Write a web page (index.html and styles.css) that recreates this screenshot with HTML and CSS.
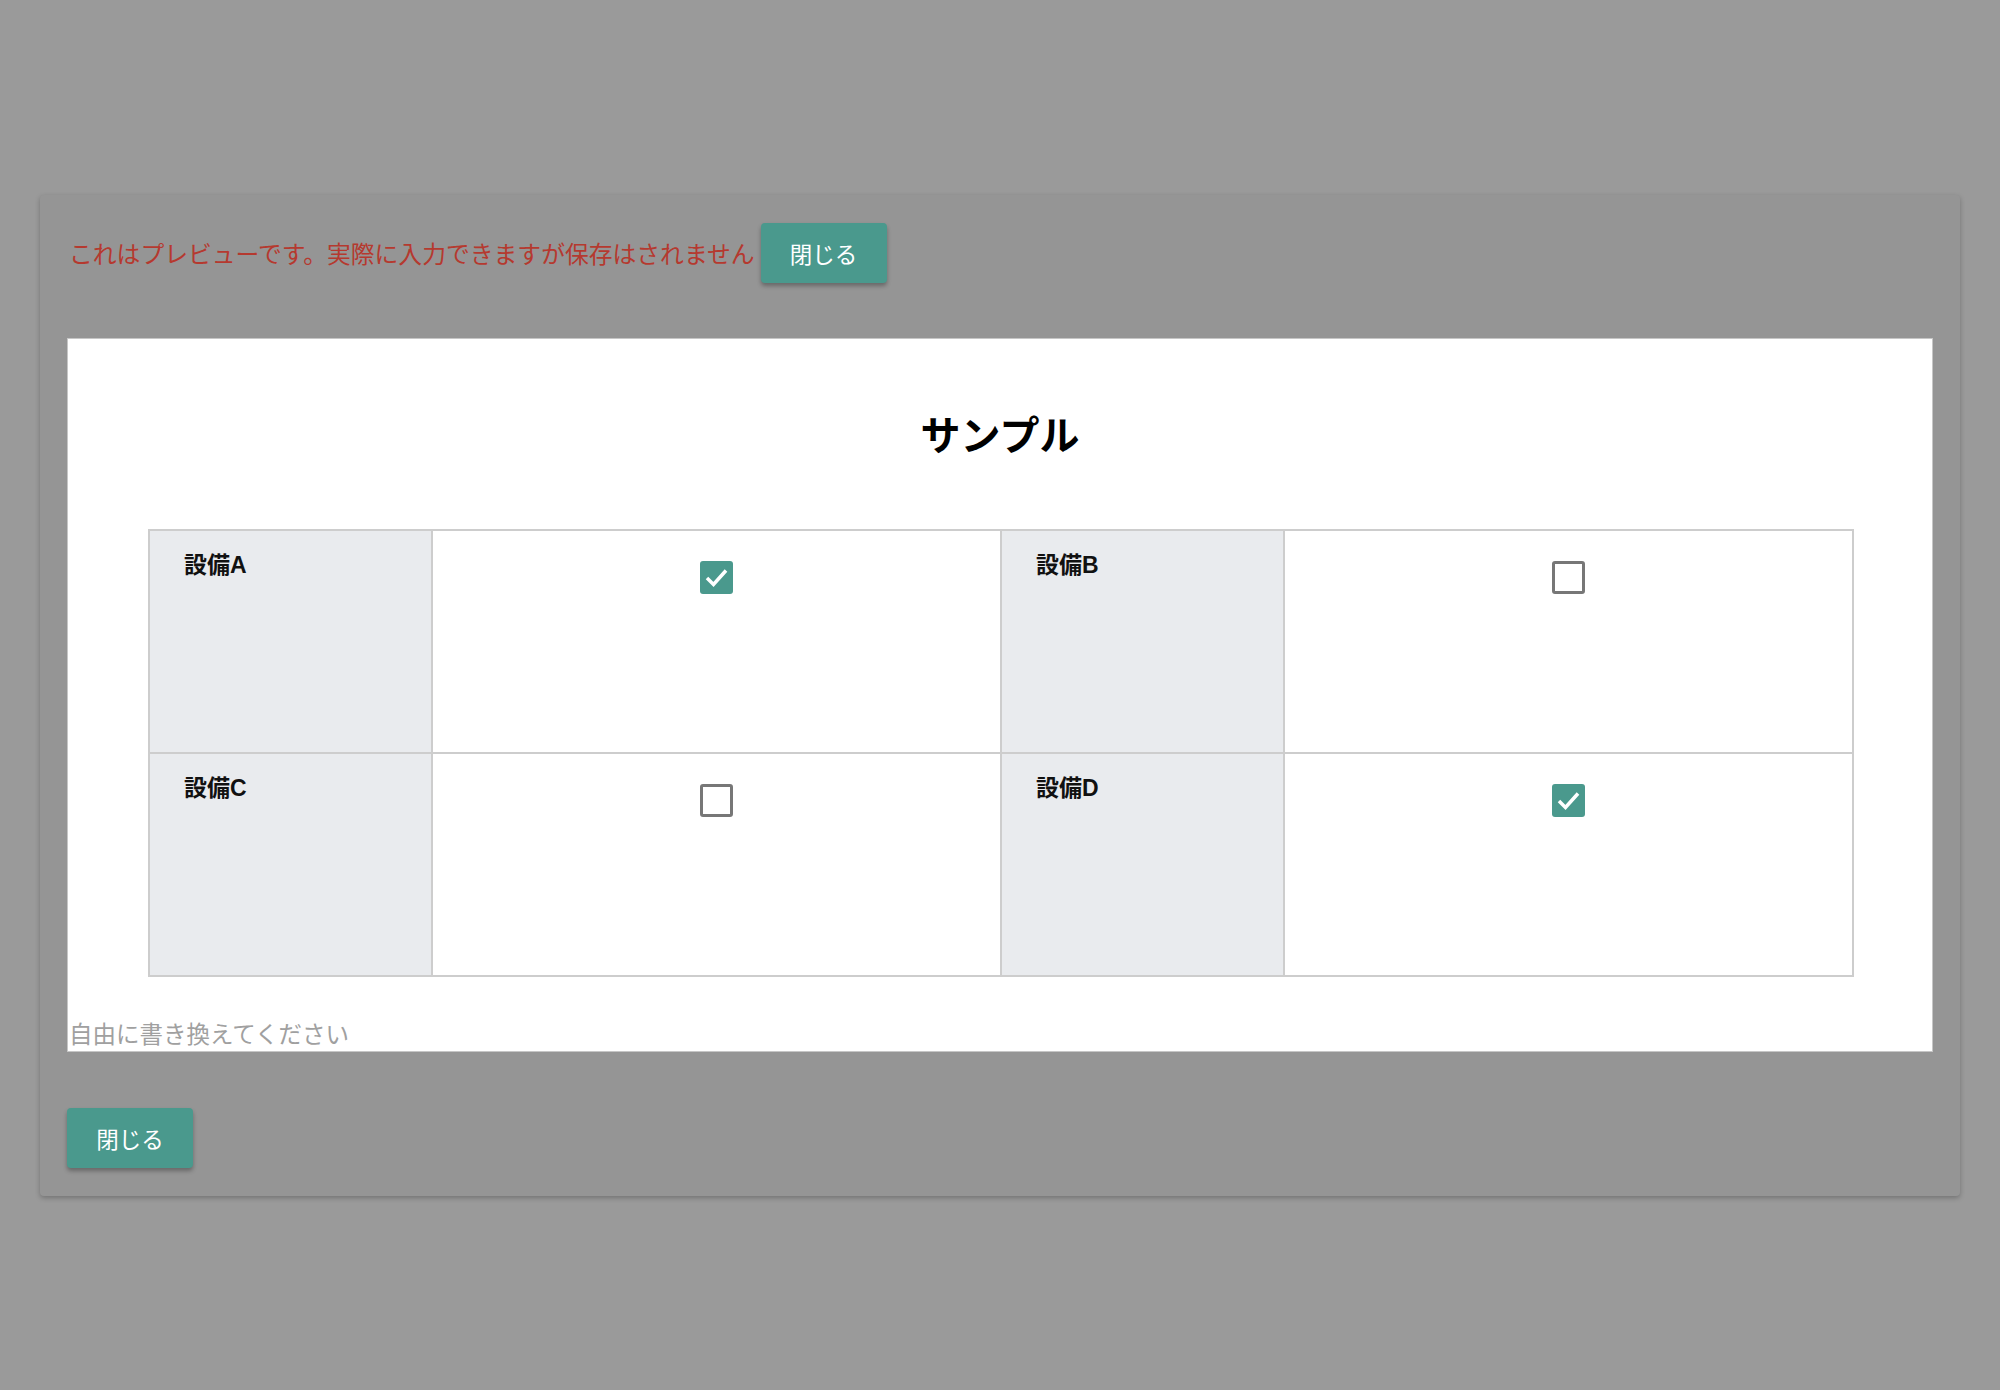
FILE: index.html
```html
<!DOCTYPE html>
<html lang="ja">
<head>
  <meta charset="utf-8">
  <title>プレビュー</title>
  <link rel="stylesheet" href="styles.css">
</head>
<body>
  <div class="dialog">
    <!-- notice row -->
    <div class="notice-row">
      <span class="notice">これはプレビューです。実際に入力できますが保存はされません</span>
      <button class="btn">閉じる</button>
    </div>

    <!-- preview sheet -->
    <div class="sheet">
      <h1 class="sheet-title">サンプル</h1>
      <table class="check-table">
        <colgroup>
          <col class="col-label">
          <col class="col-value">
          <col class="col-label">
          <col class="col-value">
        </colgroup>
        <tr>
          <th>設備A</th>
          <td><span class="box checked"><svg viewBox="0 0 33 33"><polyline points="7,17 13.5,23.5 26,9.5"/></svg></span></td>
          <th>設備B</th>
          <td><span class="box"></span></td>
        </tr>
        <tr>
          <th>設備C</th>
          <td><span class="box"></span></td>
          <th>設備D</th>
          <td><span class="box checked"><svg viewBox="0 0 33 33"><polyline points="7,17 13.5,23.5 26,9.5"/></svg></span></td>
        </tr>
      </table>
      <div class="memo">自由に書き換えてください</div>
    </div>

    <div class="footer-row">
      <button class="btn">閉じる</button>
    </div>
  </div>
</body>
</html>
```

FILE: styles.css
```css
html, body {
  height: 100%;
}

body {
  margin: 0;
  background-color: #9a9a9a;
  font-family: "Liberation Sans", "Noto Sans CJK JP", sans-serif;
  display: flex;
  align-items: center;
  justify-content: center;
}

/* Dialog */
.dialog {
  width: 1920px;
  box-sizing: border-box;
  padding: 28px 27px;
  background-color: #959595;
  border-radius: 4px;
  box-shadow: 0 2px 5px rgba(0, 0, 0, 0.25);
}

.notice-row {
  display: flex;
  align-items: center;
  gap: 6px;
  padding-left: 2px;
}

.notice {
  color: #b5392f;
  font-size: 23.8px;
  font-family: "Noto Sans CJK JP", sans-serif;
}

.btn {
  height: 60px;
  width: 126px;
  border: none;
  border-radius: 4px;
  background-color: #4a998d;
  color: white;
  font-family: "Noto Sans CJK JP", sans-serif;
  font-size: 22.5px;
  box-shadow: 0 3px 4px rgba(0, 0, 0, 0.3);
  padding: 0;
}

/* Sheet */
.sheet {
  margin-top: 55px;
  background-color: white;
  border: 1px solid #c6c6c6;
  padding-top: 64px;
}

.sheet-title {
  margin: 0;
  text-align: center;
  font-family: "Noto Sans CJK JP", sans-serif;
  font-size: 40px;
  font-weight: bold;
  line-height: 60px;
  color: black;
}

.check-table {
  margin: 66px 78px 0 80px;
  width: calc(100% - 158px);
  border-collapse: collapse;
  table-layout: fixed;
}

.col-label { width: 16.6%; }
.col-value { width: 33.4%; }

.check-table th,
.check-table td {
  border: 2px solid #cdcdcd;
  height: 223px;
  vertical-align: top;
  box-sizing: border-box;
}

.check-table th {
  background-color: #e9ebee;
  text-align: left;
  padding: 17px 0 0 34px;
  font-size: 23px;
  line-height: 34px;
  font-weight: bold;
  color: #111;
}

.check-table td {
  text-align: center;
  padding-top: 30px;
}

.box {
  display: inline-block;
  width: 33px;
  height: 33px;
  box-sizing: border-box;
  border: 3px solid #777;
  border-radius: 3px;
  vertical-align: top;
}

.box.checked {
  border: none;
  background-color: #4a998d;
}

.box svg {
  display: block;
  width: 33px;
  height: 33px;
}

.box polyline {
  fill: none;
  stroke: white;
  stroke-width: 3.5;
}

.memo {
  margin-top: 38px;
  padding-left: 1px;
  font-family: "Noto Sans CJK JP", sans-serif;
  font-size: 23.5px;
  line-height: 36px;
  color: #a0a0a0;
}

.footer-row {
  margin-top: 56px;
}
```
